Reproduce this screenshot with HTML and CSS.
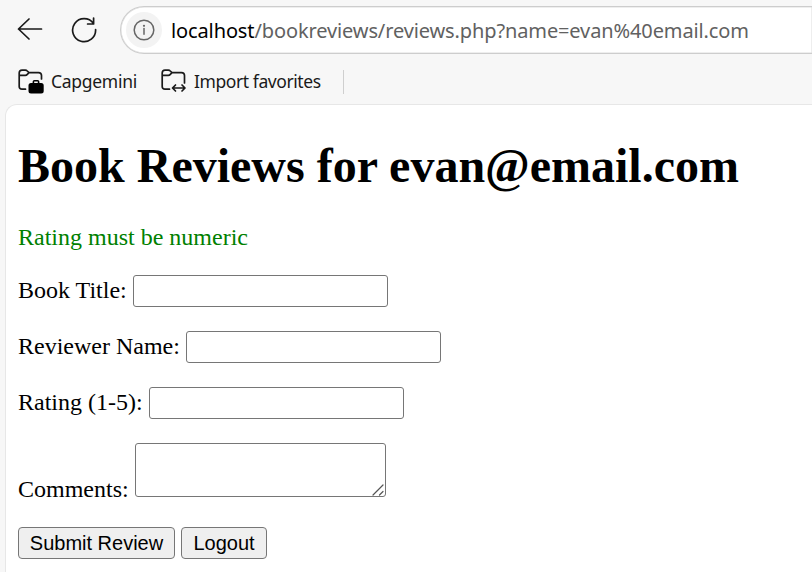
FILE: index.html
```
<!DOCTYPE html>
<html lang="en">
<head>
<meta charset="utf-8">
<title>Book Reviews</title>
<link rel="stylesheet" href="styles.css">
</head>
<body>
<header class="toolbar">
  <svg class="back" width="26" height="24" viewBox="0 0 26 24"><path d="M12 2 1.5 12 12 22M1.5 12H24.5"/></svg>
  <svg class="reload" width="26" height="26" viewBox="0 0 26 26"><path d="M24.6 12.5A11.5 11.5 0 1 1 22.5 6.5M22.6 1V7H16.6"/></svg>
  <div class="address">
    <span class="info"><svg width="22" height="22" viewBox="0 0 22 22"><circle cx="11" cy="11" r="9.8"/><path d="M11 9.6V15.3"/><circle class="dot" cx="11" cy="6.8" r="1.1"/></svg></span>
    <span class="url"><span class="host">localhost</span>/bookreviews/reviews.php?name=evan%40email.com</span>
  </div>
</header>
<nav class="favorites">
  <svg class="folder" width="27" height="26" viewBox="0 0 27 26"><path d="M7.5 20.2H4Q1.2 20.2 1.2 17.4V4Q1.2 1.2 4 1.2H7.3Q8.5 1.2 9.3 2L11 3.6H20.5Q23.5 3.6 23.5 6.6V10M1.4 6.3H7.2Q8.5 6.3 9.3 5.4L11 3.6"/><path class="solid" d="M10.5 16.5Q10.5 14 13 14H14.6V12.8Q14.6 11 16.4 11H19.6Q21.4 11 21.4 12.8V14H23.2Q25.7 14 25.7 16.5V22Q25.7 24.5 23.2 24.5H13Q10.5 24.5 10.5 22ZM16.2 14H19.8V12.5H16.2Z"/></svg>
  <span class="fav first">Capgemini</span>
  <svg class="folder" width="27" height="26" viewBox="0 0 27 26"><path d="M8.5 20.2H4Q1.2 20.2 1.2 17.4V4Q1.2 1.2 4 1.2H7.3Q8.5 1.2 9.3 2L11 3.6H20.5Q23.5 3.6 23.5 6.6V14M1.4 6.3H7.2Q8.5 6.3 9.3 5.4L11 3.6M12 19H23.5M14.5 16 11.5 19 14.5 22M21 16 24 19 21 22"/></svg>
  <span class="fav second">Import favorites</span>
  <span class="divider"></span>
</nav>
<main class="page">
  <h1>Book Reviews for evan@email.com</h1>
  <p class="message">Rating must be numeric</p>
  <form>
    <p class="row"><label for="t">Book Title:</label> <input id="t" type="text"></p>
    <p class="row"><label for="n">Reviewer Name:</label> <input id="n" type="text"></p>
    <p class="row"><label for="r">Rating (1-5):</label> <input id="r" type="text"></p>
    <p class="row comments"><label for="c">Comments:</label>
      <span class="area"><textarea id="c"></textarea><svg class="grip" width="12" height="12" viewBox="0 0 12 12"><path d="M1 11 11 1M7.5 11 11 7.5"/></svg></span></p>
    <div class="actions"><button class="submit" type="button">Submit Review</button><button class="logout" type="button">Logout</button></div>
  </form>
</main>
</body>
</html>
```
FILE: styles.css
```
* { box-sizing: border-box; }
body {
  margin: 0;
  height: 572px;
  overflow: hidden;
  background: #f7f7f7;
  display: flex;
  flex-direction: column;
  font-family: "Noto Sans", sans-serif;
}
svg { flex: none; display: block; fill: none; stroke: #1a1a1a; stroke-width: 1.7; stroke-linecap: round; stroke-linejoin: round; }
.toolbar { flex: none; height: 60px; display: flex; align-items: center; padding-left: 17px; }
.back { margin-right: 28px; position: relative; top: -1px; }
.reload { margin-right: 23px; }
.address {
  flex: 1;
  height: 48px;
  border: 1px solid #cdcdcd;
  border-right: 0;
  border-radius: 24px 0 0 24px;
  background: #fff;
  box-shadow: inset 0 0 0 0.5px #ddd;
  display: flex;
  align-items: center;
  padding-left: 5px;
}
.info { width: 36px; height: 36px; border-radius: 50%; background: #f3f3f3; display: flex; align-items: center; justify-content: center; margin-right: 9px; }
.info svg { stroke: #666; stroke-width: 1.5; }
.info .dot { fill: #666; stroke: none; }
.url { font-size: 20px; letter-spacing: -0.12px; color: #616161; white-space: nowrap; }
.host { color: #000; }
.favorites { flex: none; height: 44px; display: flex; align-items: center; padding-left: 17px; }
.folder { margin-left: 1px; margin-right: -1px; }
.folder .solid { fill: #000; stroke: none; fill-rule: evenodd; }
.fav { font-size: 17.5px; line-height: 24px; color: #1a1a1a; white-space: nowrap; padding-bottom: 2px; }
.first { width: 103px; margin-left: 7px; margin-right: 6px; letter-spacing: -0.28px; }
.second { width: 143px; margin-left: 7px; letter-spacing: -0.42px; }
.divider { width: 1px; height: 24px; background: #cfcfcf; margin-left: 6px; }
.page {
  flex: 1;
  margin-left: 5px;
  border: 1px solid #e7e7e7;
  border-right: 0;
  border-bottom: 0;
  border-radius: 12px 0 0 0;
  background: #fff;
  padding: 33px 0 0 12px;
  font-family: "Liberation Serif", serif;
  font-size: 24px;
  line-height: 28px;
  color: #000;
}
h1 { margin: 0 0 30px; font-size: 48px; line-height: 55px; }
p { margin: 0; }
.message { color: #008000; margin-bottom: 24px; }
.row { display: flex; align-items: center; gap: 6px; height: 32px; margin-bottom: 24px; }
.row label { padding-bottom: 2px; }
input, textarea { display: block; margin: 0; border: 1px solid #767676; border-radius: 3px; background: #fff; }
input { width: 255px; height: 32px; }
.comments { height: 54px; align-items: flex-end; margin-bottom: 30px; }
.comments label { padding-bottom: 0; margin-bottom: -6px; }
.area { position: relative; }
textarea { width: 251px; height: 54px; resize: none; }
.grip { position: absolute; right: 2px; bottom: 1px; stroke: #555; stroke-width: 1.2; }
.actions { display: flex; gap: 6px; }
button { height: 32px; padding: 0; border: 1px solid #767676; border-radius: 4px; background: #efefef; color: #000; font: 20px "Liberation Sans", sans-serif; white-space: nowrap; }
.submit { width: 157px; }
.logout { width: 86px; }
```
